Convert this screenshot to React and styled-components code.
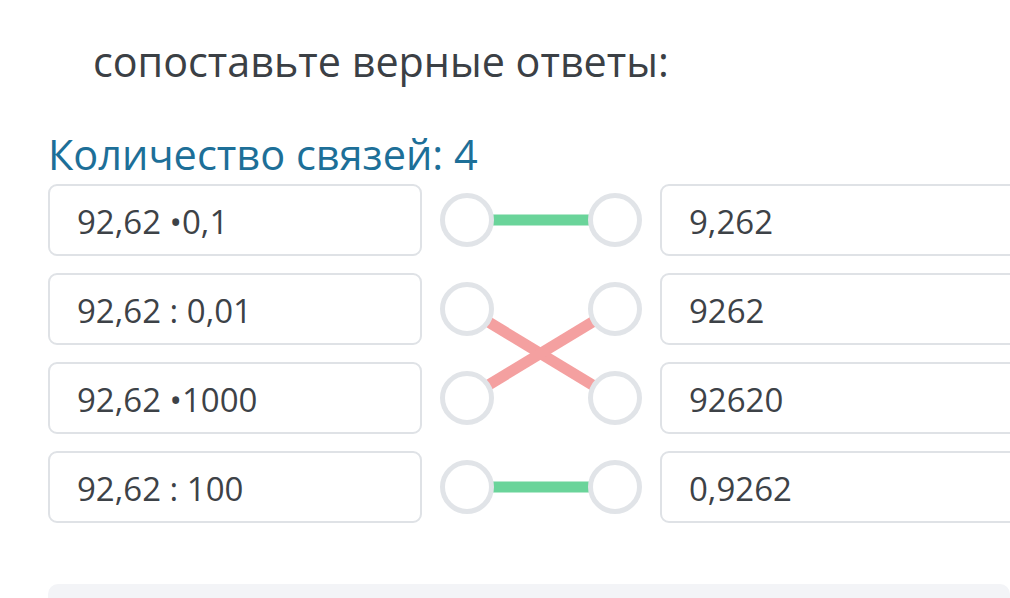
import React from "react";
import styled, { createGlobalStyle } from "styled-components";

const Global = createGlobalStyle`
  html, body { margin: 0; padding: 0; background: #ffffff; overflow: hidden; }
  body { font-family: "Open Sans", "Noto Sans", sans-serif; }
`;

const Page = styled.div`
  width: 1010px;
  height: 598px;
  overflow: hidden;
  padding: 0 0 0 48px;
  box-sizing: border-box;
`;

const Title = styled.h1`
  margin: 0;
  padding: 33px 0 0 45px;
  font-size: 41.3px;
  line-height: 56px;
  font-weight: 400;
  color: #3b4045;
`;

const Counter = styled.div`
  margin-top: 39px;
  font-size: 41.5px;
  line-height: 52px;
  font-weight: 400;
  color: #1d6f98;
`;

const Board = styled.div`
  display: flex;
  margin-top: 4px;
`;

const Column = styled.div`
  display: flex;
  flex-direction: column;
  gap: 17px;
  flex: 0 0 ${(p) => p.$width}px;
`;

const Cell = styled.div`
  height: 72px;
  box-sizing: border-box;
  border: 2px solid #dfe2e6;
  border-radius: 9px;
  display: flex;
  align-items: center;
  padding: 2px 0 0 27px;
  font-size: 33px;
  color: #3d4247;
  white-space: nowrap;
`;

const Middle = styled.div`
  position: relative;
  flex: 0 0 238px;
  display: flex;
  flex-direction: column;
  gap: 17px;
  padding: 0 18px;
  box-sizing: border-box;
`;

const PairRow = styled.div`
  height: 72px;
  display: flex;
  align-items: center;
  justify-content: space-between;
  position: relative;
  z-index: 1;
`;

const Dot = styled.div`
  width: 54px;
  height: 54px;
  box-sizing: border-box;
  border-radius: 50%;
  border: 5px solid #e1e4e8;
  background: #ffffff;
`;

const Lines = styled.svg`
  position: absolute;
  left: 0;
  top: 0;
  z-index: 0;
`;

const Footer = styled.div`
  margin-top: 61px;
  height: 60px;
  border-radius: 10px;
  background: #f3f4f7;
`;

const left = ["92,62 •0,1", "92,62 : 0,01", "92,62 •1000", "92,62 : 100"];
const right = ["9,262", "9262", "92620", "0,9262"];

const rowY = (i) => 36 + i * 89;
const links = [
  { a: 0, b: 0, color: "#6ad49a" },
  { a: 1, b: 2, color: "#f4a0a0" },
  { a: 2, b: 1, color: "#f4a0a0" },
  { a: 3, b: 3, color: "#6ad49a" },
];

export default function App() {
  return (
    <>
      <Global />
      <Page>
        <Title>сопоставьте верные ответы:</Title>
        <Counter>Количество связей: 4</Counter>
        <Board>
          <Column $width={374}>
            {left.map((t) => (
              <Cell key={t}>{t}</Cell>
            ))}
          </Column>
          <Middle>
            <Lines width="238" height="339" viewBox="0 0 238 339">
              {links.map((l, i) => (
                <line
                  key={i}
                  x1="45"
                  y1={rowY(l.a)}
                  x2="192"
                  y2={rowY(l.b)}
                  stroke={l.color}
                  strokeWidth="11"
                />
              ))}
            </Lines>
            {left.map((_, i) => (
              <PairRow key={i}>
                <Dot />
                <Dot />
              </PairRow>
            ))}
          </Middle>
          <Column $width={375}>
            {right.map((t) => (
              <Cell key={t}>{t}</Cell>
            ))}
          </Column>
        </Board>
        <Footer />
      </Page>
    </>
  );
}
